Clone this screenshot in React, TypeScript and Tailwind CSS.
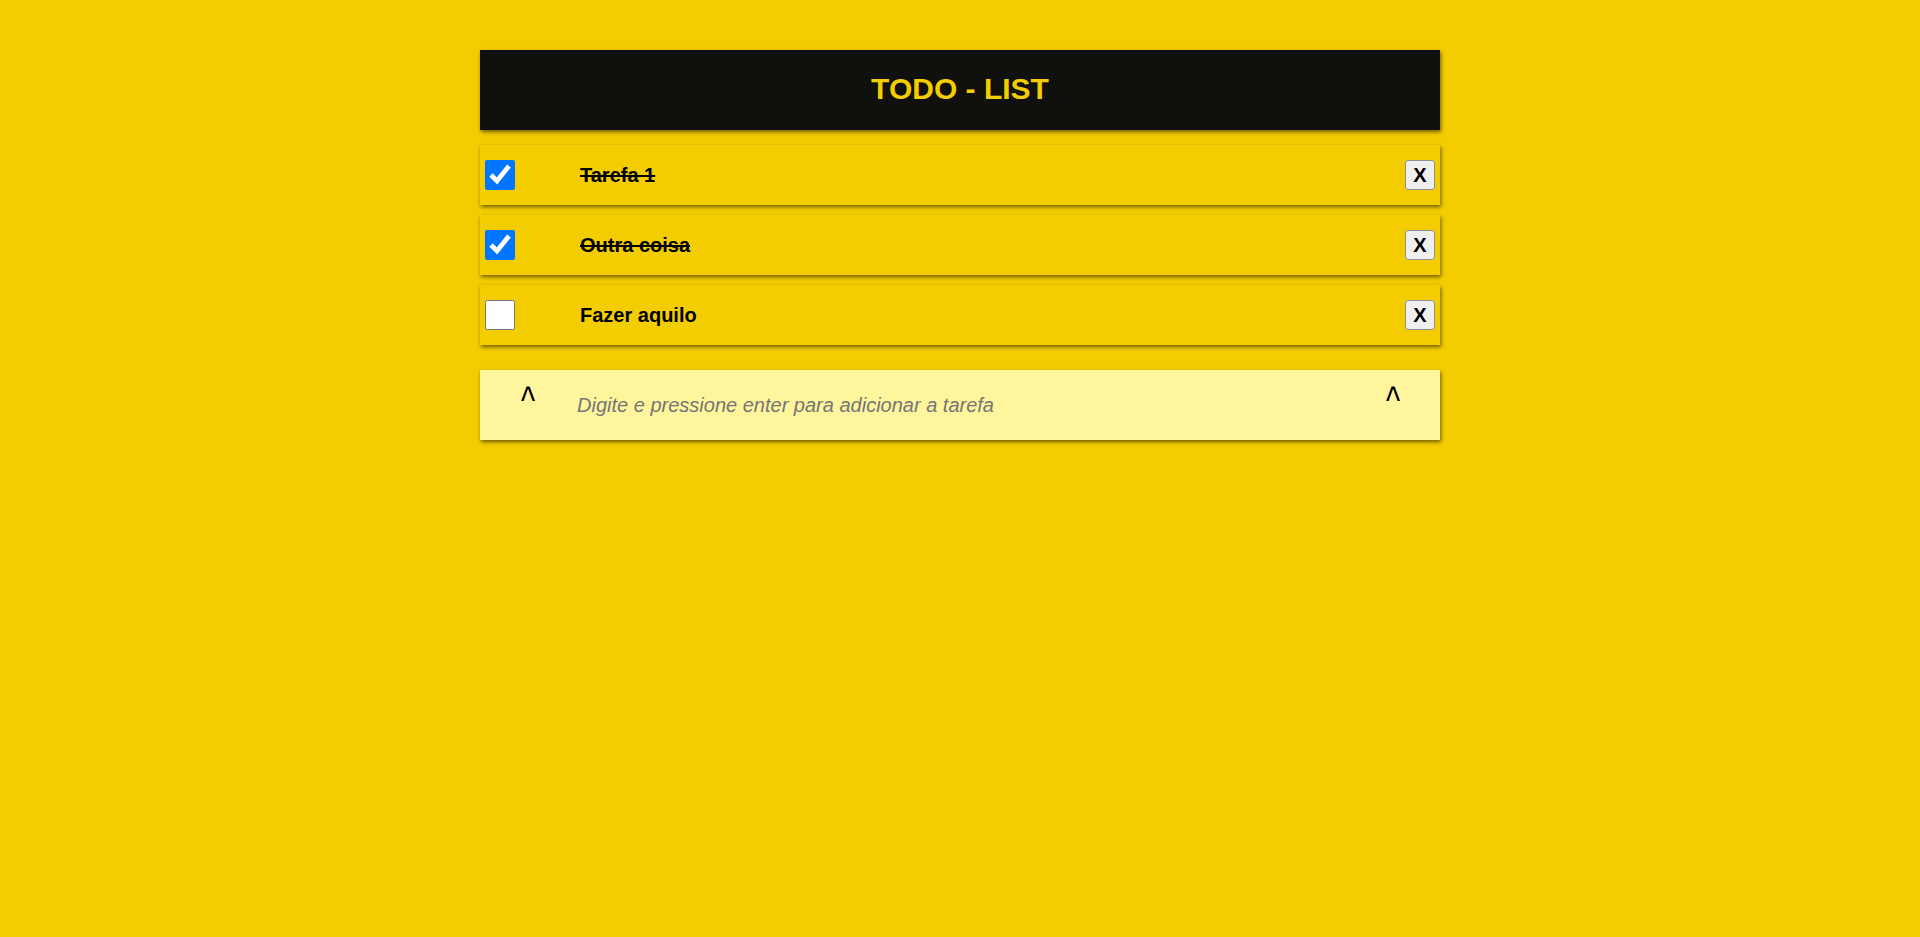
import React from 'react';

interface Task {
  id: number;
  text: string;
  done: boolean;
}

const tasks: Task[] = [
  { id: 1, text: 'Tarefa 1', done: true },
  { id: 2, text: 'Outra coisa', done: true },
  { id: 3, text: 'Fazer aquilo', done: false },
];

const TaskRow = ({ task }: { task: Task }) => (
  <li className="flex items-center h-[60px] pl-[5px] pr-[5px] bg-[#f4cd00] shadow-[1px_2px_4px_rgba(0,0,0,0.55)]">
    <input
      type="checkbox"
      defaultChecked={task.done}
      className="w-[30px] h-[30px] m-0 accent-[#0075ff]"
    />
    <span
      className={`ml-[65px] flex-1 text-[20px] font-bold text-black ${
        task.done ? 'line-through' : ''
      }`}
    >
      {task.text}
    </span>
    <button className="w-[30px] h-[30px] flex items-center justify-center bg-[#efefef] border border-[#8f8f8f] rounded-[3px] text-[20px] font-bold text-black">
      X
    </button>
  </li>
);

export default function App() {
  return (
    <div className="min-h-screen bg-[#f4cd00] font-['Liberation_Sans',Arial,sans-serif]">
      <div className="w-[960px] mx-auto pt-[50px]">
        {/* Header */}
        <header className="h-[80px] flex items-center justify-center pb-[3px] bg-[#10100c] shadow-[1px_2px_4px_rgba(0,0,0,0.55)]">
          <h1 className="text-[30px] font-bold text-[#f4cd00]">TODO - LIST</h1>
        </header>

        {/* Tasks */}
        <ul className="flex flex-col gap-[10px] mt-[15px]">
          {tasks.map((t) => (
            <TaskRow key={t.id} task={t} />
          ))}
        </ul>

        {/* New task */}
        <div className="flex items-start h-[70px] mt-[25px] pl-[41px] pr-[40px] bg-[#fff59d] shadow-[1px_2px_4px_rgba(0,0,0,0.55)]">
          <span className="mt-[10px] text-[30px] leading-[30px] text-black scale-y-[1.35] origin-top">^</span>
          <input
            type="text"
            placeholder="Digite e pressione enter para adicionar a tarefa"
            className="flex-1 self-stretch ml-[42px] bg-transparent outline-none text-[20px] italic text-[#333] placeholder:text-[#757575]"
          />
          <span className="mt-[10px] text-[30px] leading-[30px] text-black scale-y-[1.35] origin-top">^</span>
        </div>
      </div>
    </div>
  );
}
